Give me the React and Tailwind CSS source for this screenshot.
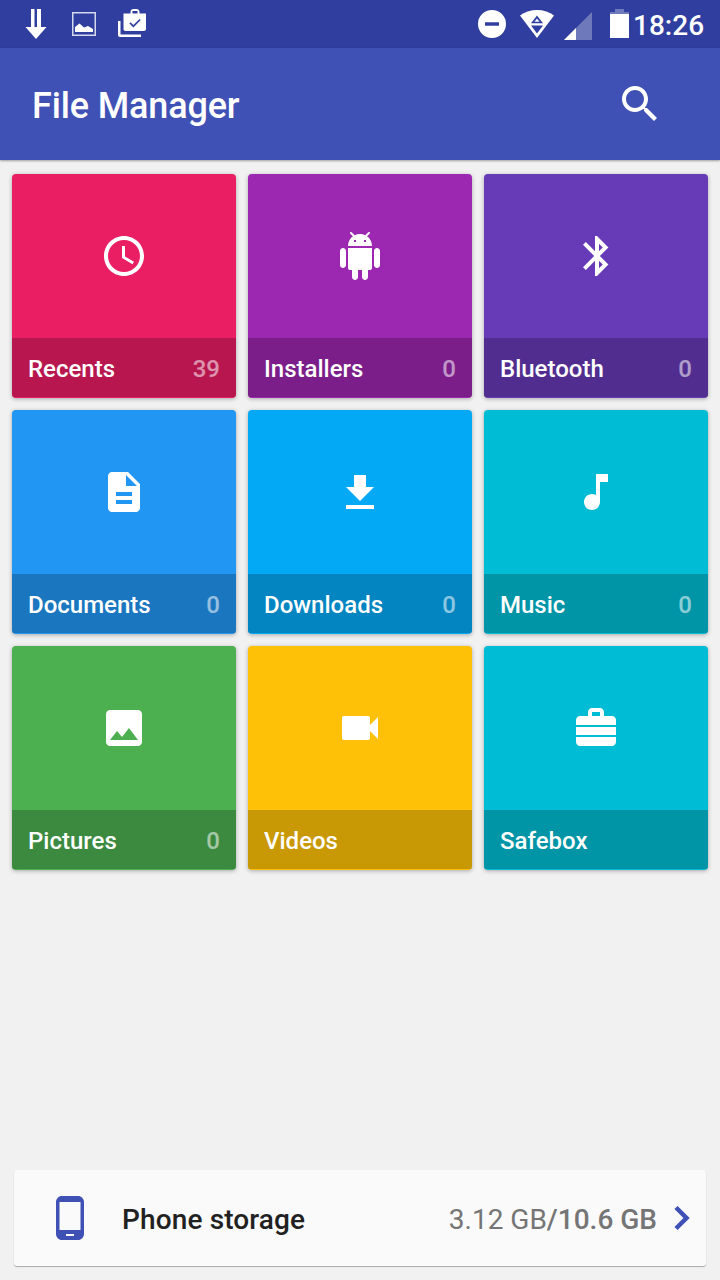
import React from 'react';

const tiles = [
  {
    name: 'Recents',
    count: 39,
    color: 'bg-[#e91e63]',
    path: 'M11.99 2C6.47 2 2 6.48 2 12s4.47 10 9.99 10C17.52 22 22 17.52 22 12S17.52 2 11.99 2zM12 20c-4.42 0-8-3.58-8-8s3.58-8 8-8 8 3.58 8 8-3.58 8-8 8zm.5-13H11v6l5.25 3.15.75-1.23-4.5-2.67z',
  },
  {
    name: 'Installers',
    count: 0,
    color: 'bg-[#9c27b0]',
    path: 'M6 18c0 .55.45 1 1 1h1v3.5c0 .83.67 1.5 1.5 1.5s1.5-.67 1.5-1.5V19h2v3.5c0 .83.67 1.5 1.5 1.5s1.5-.67 1.5-1.5V19h1c.55 0 1-.45 1-1V8H6v10zM3.5 8C2.67 8 2 8.67 2 9.5v7c0 .83.67 1.5 1.5 1.5S5 17.33 5 16.5v-7C5 8.67 4.33 8 3.5 8zm17 0c-.83 0-1.5.67-1.5 1.5v7c0 .83.67 1.5 1.5 1.5s1.5-.67 1.5-1.5v-7c0-.83-.67-1.5-1.5-1.5zm-4.97-5.84l1.3-1.3c.2-.2.2-.51 0-.71-.2-.2-.51-.2-.71 0l-1.48 1.48C13.85 1.23 12.95 1 12 1c-.96 0-1.86.23-2.66.63L7.85.15c-.2-.2-.51-.2-.71 0-.2.2-.2.51 0 .71l1.31 1.31C6.97 3.26 6 5.01 6 7h12c0-1.99-.97-3.75-2.47-4.84zM10 5H9V4h1v1zm5 0h-1V4h1v1z',
  },
  {
    name: 'Bluetooth',
    count: 0,
    color: 'bg-[#673ab7]',
    path: 'M17.71 7.71L12 2h-1v7.59L6.41 5 5 6.41 10.59 12 5 17.59 6.41 19 11 14.41V22h1l5.71-5.71-4.3-4.29 4.3-4.29zM13 5.83l1.88 1.88L13 9.59V5.83zm1.88 10.46L13 18.17v-3.76l1.88 1.88z',
    iconClass: 'ml-[1.5px]',
  },
  {
    name: 'Documents',
    count: 0,
    color: 'bg-[#2196f3]',
    path: 'M14 2H6c-1.1 0-1.99.9-1.99 2L4 20c0 1.1.89 2 1.99 2H18c1.1 0 2-.9 2-2V8l-6-6zm2 16H8v-2h8v2zm0-4H8v-2h8v2zm-3-5V3.5L18.5 9H13z',
  },
  {
    name: 'Downloads',
    count: 0,
    color: 'bg-[#03a9f4]',
    path: 'M19 9h-4V3H9v6H5l7 7 7-7zM5 18v2h14v-2H5z',
    iconClass: 'mt-px',
  },
  {
    name: 'Music',
    count: 0,
    color: 'bg-[#00bcd4]',
    path: 'M12 3v10.55c-.59-.34-1.27-.55-2-.55-2.21 0-4 1.79-4 4s1.79 4 4 4 4-1.79 4-4V7h4V3h-6z',
  },
  {
    name: 'Pictures',
    count: 0,
    color: 'bg-[#4caf50]',
    path: 'M21 19V5c0-1.1-.9-2-2-2H5c-1.1 0-2 .9-2 2v14c0 1.1.9 2 2 2h14c1.1 0 2-.9 2-2zM8.5 13.5l2.5 3.01L14.5 12l4.5 6H5l3.5-4.5z',
  },
  {
    name: 'Videos',
    color: 'bg-[#ffc107]',
    path: 'M17 10.5V7c0-.55-.45-1-1-1H4c-.55 0-1 .45-1 1v10c0 .55.45 1 1 1h12c.55 0 1-.45 1-1v-3.5l4 4v-11l-4 4z',
  },
  {
    name: 'Safebox',
    color: 'bg-[#00bcd4]',
    path: 'M2 10.5V8c0-1.1.9-2 2-2h4V4c0-1.1.9-2 2-2h4c1.1 0 2 .9 2 2v2h4c1.1 0 2 .9 2 2v2.5H2zM10 6h4V4h-4v2zM2 11.5h20v4H2zM2 16.5h20V19c0 1.1-.9 2-2 2H4c-1.1 0-2-.9-2-2v-2.5z',
  },
];

const Icon = ({ path, className = '' }) => (
  <svg viewBox="0 0 24 24" fill="currentColor" fillRule="evenodd" className={`w-12 h-12 shrink-0 ${className}`}>
    <path d={path} />
  </svg>
);

const StatusBar = () => (
  <div className="flex items-center justify-between h-12 pl-6 pr-4 text-white bg-[#303f9f]">
    <div className="flex items-center">
      {/* Download */}
      <svg viewBox="0 0 24 48" className="w-6 h-12" fill="currentColor">
        <path d="M7 9h3.500v18H7zM13 9h4v18h-4zM1.500 27h21L12 39z" />
      </svg>
      {/* Screenshot */}
      <svg viewBox="0 0 24 48" className="w-6 h-12 ml-6" fill="currentColor">
        <path d="M.75 12.75h22.5v22.5H.75z" fill="none" stroke="currentColor" strokeWidth="1.5" opacity=".8" />
        <path d="M3 32v-5l4.500-3.500 4.500 4 4-1.500 5 3v3z" />
      </svg>
      {/* Shop */}
      <svg viewBox="0 0 28 48" className="w-7 h-12 ml-[22px]" fill="currentColor">
        <path d="M0 21h2.500v13.500H23V37H2c-1.100 0-2-.9-2-2z" />
        <path d="M5.500 13.500h7V12c0-1.700 1.300-3 3-3h3c1.700 0 3 1.300 3 3v1.500H28V29c0 1.100-.9 2-2 2H7.500c-1.100 0-2-.9-2-2zM14.500 13.500h5V11h-5zM12.600 22.200l-1.200 1.200 4 4 7.300-7.300-1.200-1.200-6.100 6.100z" fillRule="evenodd" />
      </svg>
    </div>

    <div className="flex items-center">
      {/* Do not disturb */}
      <svg viewBox="0 0 28 48" className="w-7 h-12" fill="currentColor">
        <path d="M14 10a14 14 0 1 0 0 28 14 14 0 0 0 0-28zM7 22.300h14v3.400H7z" fillRule="evenodd" />
      </svg>
      {/* Wifi */}
      <svg viewBox="0 0 34 48" className="w-[34px] h-12 ml-[14px]">
        <path d="M0 15.500C4.500 12 10.500 10 17 10s12.500 2 17 5.500L17 38z" fill="currentColor" />
        <path d="M17 15.500l6 7.700H11zM11 25.500h12L17 33.500z" fill="#303f9f" />
        <path d="M17 18.600l2.500 3.200h-5z" fill="currentColor" />
      </svg>
      {/* Signal */}
      <svg viewBox="0 0 28 48" className="w-7 h-12 ml-[10px]" fill="currentColor">
        <path d="M28 12v28H0z" opacity=".3" />
        <path d="M12 28v12H0z" />
      </svg>
      {/* Battery */}
      <svg viewBox="0 0 19 48" className="w-[19px] h-12 ml-[18px]" fill="currentColor">
        <path d="M5 9h9v3h5v2H0v-2h5z" opacity=".3" />
        <path d="M0 14h19v24H0z" />
      </svg>
      <span className="ml-1 pt-[3px] w-[71px] text-[28px] leading-none font-medium whitespace-nowrap">18:26</span>
    </div>
  </div>
);

const Tile = ({ tile }) => (
  <div className={`flex flex-col h-56 pb-px overflow-hidden text-white rounded-[4px] shadow-[0_1px_4px_rgba(0,0,0,0.3)] ${tile.color}`}>
    <div className="flex items-center justify-center h-[164px]">
      <Icon path={tile.path} className={tile.iconClass} />
    </div>
    <div className="flex items-center justify-between flex-1 pt-0.5 px-4 text-2xl font-medium bg-black/21">
      <span>{tile.name}</span>
      {tile.count !== undefined && <span className="text-white/54">{tile.count}</span>}
    </div>
  </div>
);

const App = () => {
  return (
    <div className="flex flex-col w-[720px] h-[1280px] overflow-hidden bg-[#f1f1f1] font-[Roboto,sans-serif]">
      <StatusBar />

      <header className="flex items-center justify-between h-28 pl-8 pr-14 text-white bg-[#3f51b5] shadow-[0_1px_2px_rgba(0,0,0,0.35)]">
        <h1 className="pt-[3px] text-4xl font-medium tracking-[-0.15px]">File Manager</h1>
        <Icon path="M15.500 14h-.79l-.28-.27C15.410 12.590 16 11.110 16 9.500 16 5.910 13.090 3 9.500 3S3 5.910 3 9.500 5.910 16 9.500 16c1.610 0 3.090-.59 4.230-1.570l.27.28v.79l5 4.990L20.490 19l-4.990-5zm-6 0C7.010 14 5 11.990 5 9.500S7.010 5 9.500 5 14 7.010 14 9.500 11.990 14 9.500 14z" />
      </header>

      <main className="grid grid-cols-3 gap-3 px-3 pt-[14px]">
        {tiles.map((tile) => (
          <Tile key={tile.name} tile={tile} />
        ))}
      </main>

      {/* Storage summary */}
      <footer className="flex items-center h-24 mx-[14px] mt-auto mb-[14px] pl-8 pr-px rounded-[3px] bg-[#fafafa] text-[28px] shadow-[0_1px_1px_rgba(0,0,0,0.3)]">
        <Icon
          className="text-[#3f51b5]"
          path="M16 1H8C6.340 1 5 2.340 5 4v16c0 1.660 1.340 3 3 3h8c1.660 0 3-1.340 3-3V4c0-1.660-1.340-3-3-3zm-2 20h-4v-1h4v1zm3.250-3H6.750V4h10.500v14z"
        />
        <span className="pt-[3px] ml-7 font-medium tracking-[0.13px] text-[#212121]">Phone storage</span>
        <span className="pt-[3px] ml-auto text-[#757575]">
          3.12 GB<span className="font-medium">/10.6 GB</span>
        </span>
        <svg viewBox="0 0 48 48" className="w-12 h-12 shrink-0 text-[#3f51b5]" fill="none" stroke="currentColor" strokeWidth="4.5">
          <path d="M19 13.500L29.500 24 19 34.500" />
        </svg>
      </footer>
    </div>
  );
};

export default App;
